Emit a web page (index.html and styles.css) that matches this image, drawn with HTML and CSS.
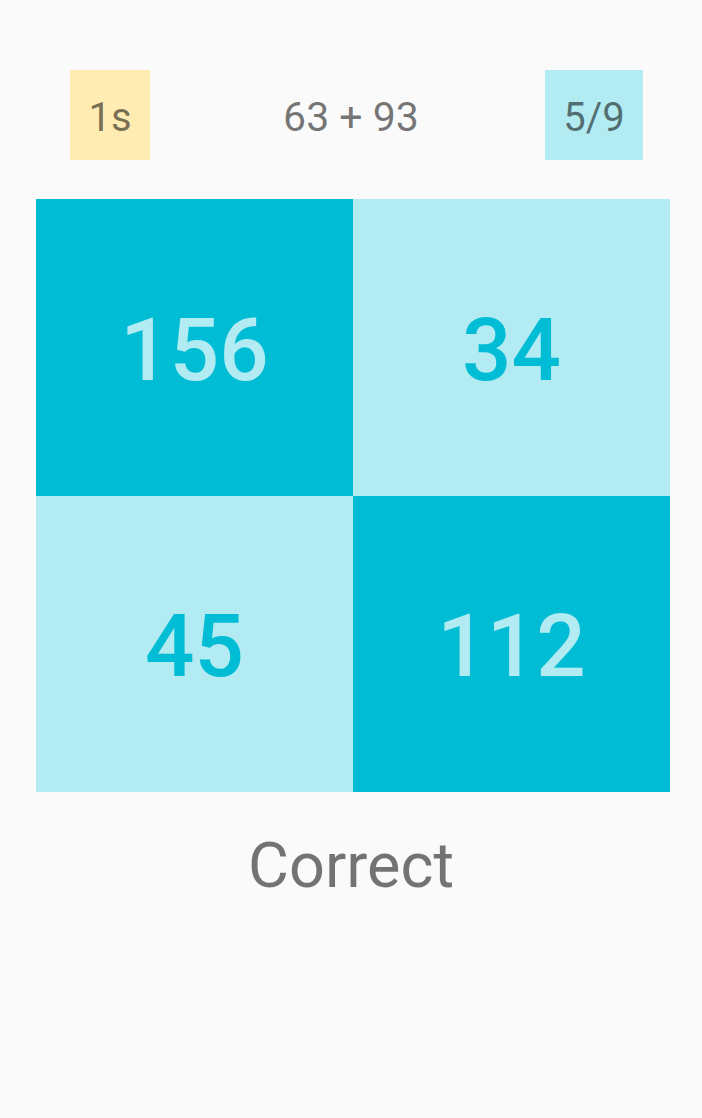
FILE: index.html
```html
<!DOCTYPE html>
<html>
<head>
<meta charset="utf-8">
<link rel="stylesheet" href="styles.css">
</head>
<body>
<div class="app">
  <div class="top">
    <div class="badge timer">1s</div>
    <div class="question">63 + 93</div>
    <div class="badge progress">5/9</div>
  </div>
  <div class="grid">
    <div class="cell dark">156</div>
    <div class="cell light">34</div>
    <div class="cell light">45</div>
    <div class="cell dark">112</div>
  </div>
  <div class="result">Correct</div>
</div>
</body>
</html>
```
FILE: styles.css
```css
html, body {
  margin: 0;
  padding: 0;
  background: #fafafa;
}
body {
  font-family: Roboto, "Liberation Sans", sans-serif;
  width: 702px;
  height: 1118px;
  overflow: hidden;
}
.app {
  display: flex;
  flex-direction: column;
}
.top {
  display: grid;
  grid-template-columns: 1fr auto 1fr;
  align-items: center;
  margin-top: 70px;
  height: 90px;
}
.badge {
  height: 90px;
  display: flex;
  align-items: center;
  justify-content: center;
  padding-top: 4px;
  box-sizing: border-box;
  font-size: 40px;
  color: rgba(0, 0, 0, 0.54);
}
.timer {
  width: 80px;
  background: #ffecb3;
  justify-self: start;
  margin-left: 70px;
}
.progress {
  width: 98px;
  background: #b2ebf2;
  justify-self: end;
  margin-right: 59px;
}
.question {
  font-size: 41px;
  padding-top: 4px;
  color: rgba(0, 0, 0, 0.54);
}
.grid {
  margin: 39px 32px 0 36px;
  height: 593px;
  display: grid;
  grid-template-columns: 1fr 1fr;
  grid-template-rows: 1fr 1fr;
}
.cell {
  display: flex;
  align-items: center;
  justify-content: center;
  padding-top: 5px;
  font-size: 87px;
  font-weight: 500;
}
.dark {
  background: #00bcd4;
  color: #b2ebf2;
}
.light {
  background: #b2ebf2;
  color: #00bcd4;
}
.result {
  margin-top: 42px;
  text-align: center;
  font-size: 63px;
  line-height: 64px;
  color: rgba(0, 0, 0, 0.54);
}
```
